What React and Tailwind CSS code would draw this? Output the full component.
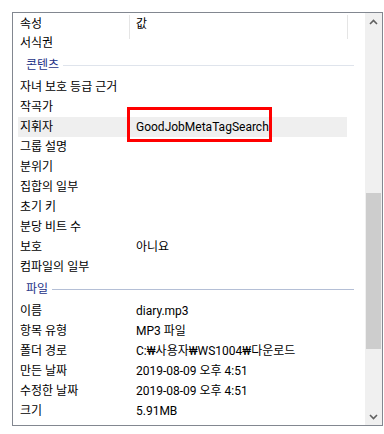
const groups = [
  {
    title: '콘텐츠',
    line: 'bg-[#dfe4ec]',
    rows: [
      ['자녀 보호 등급 근거', ''],
      ['작곡가', ''],
      ['지휘자', 'GoodJobMetaTagSearch', true],
      ['그룹 설명', ''],
      ['분위기', ''],
      ['집합의 일부', ''],
      ['초기 키', ''],
      ['분당 비트 수', ''],
      ['보호', '아니요'],
      ['컴파일의 일부', ''],
    ],
  },
  {
    title: '파일',
    line: 'bg-[#b4bfd6]',
    rows: [
      ['이름', 'diary.mp3'],
      ['항목 유형', 'MP3 파일'],
      ['폴더 경로', 'C:₩사용자₩WS1004₩다운로드'],
      ['만든 날짜', '2019-08-09 오후 4:51'],
      ['수정한 날짜', '2019-08-09 오후 4:51'],
      ['크기', '5.91MB'],
    ],
  },
];

function Row({ name, value, selected }) {
  return (
    <div
      className={`ml-[5px] flex h-[20px] w-[329px] items-center leading-[20px] ${
        selected ? 'bg-[#efefef]' : ''
      }`}
    >
      <span className="w-[118px] shrink-0 pl-[2px]">{name}</span>
      <span className="whitespace-nowrap">{value}</span>
    </div>
  );
}

function Chevron({ down }) {
  return (
    <svg width="9" height="6" viewBox="0 0 9 6" className={down ? 'rotate-180' : ''}>
      <path d="M1 5 L4.5 1.5 L8 5" fill="none" stroke="#606060" strokeWidth="1.6" />
    </svg>
  );
}

export default function App() {
  return (
    <div
      className="relative h-[434px] w-[384px] bg-white pl-[12px] pt-[12px] text-[12px] text-black"
      style={{ fontFamily: 'Roboto, "Noto Sans CJK KR", sans-serif' }}
    >
      <div className="flex h-[414px] w-[371px] border border-[#828790] bg-white">
        <div className="flex min-w-0 flex-1 flex-col">
          <div className="relative flex h-[20px] shrink-0 pt-[1px] leading-[20px]">
            <span className="w-[123px] pl-[7px]">속성</span>
            <span>값</span>
            <span className="absolute left-[116px] top-[2px] h-[24px] w-px bg-[#e5e5e5]" />
            <span className="absolute left-[334px] top-[2px] h-[24px] w-px bg-[#e5e5e5]" />
          </div>
          <div className="flex-1 overflow-hidden">
            <Row name="서식권" value="" />
            {groups.map((g) => (
              <div key={g.title}>
                <div className="flex h-[24px] items-center pl-[13px] pr-[11px]">
                  <span className="text-[#1e3287]">{g.title}</span>
                  <span className={`ml-[4px] h-px flex-1 ${g.line}`} />
                </div>
                {g.rows.map(([name, value, sel]) => (
                  <Row key={name} name={name} value={value} selected={sel} />
                ))}
              </div>
            ))}
          </div>
        </div>
        <div className="flex w-[17px] shrink-0 flex-col bg-[#f0f0f0]">
          <div className="flex h-[17px] items-center justify-center">
            <Chevron />
          </div>
          <div className="h-[163px]" />
          <div className="mx-px h-[156px] bg-[#cdcdcd]" />
          <div className="flex-1" />
          <div className="flex h-[17px] items-center justify-center">
            <Chevron down />
          </div>
        </div>
      </div>
      <div className="absolute left-[127px] top-[107px] h-[35px] w-[145px] border-[3px] border-[#ff0000]" />
    </div>
  );
}
